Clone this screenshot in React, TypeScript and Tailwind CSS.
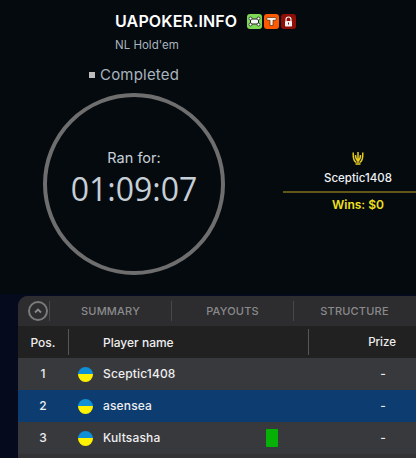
const F = "font-['Inter','Noto_Sans',sans-serif]";

function Flag() {
  return (
    <span className="flex h-[15px] w-[15px] flex-col overflow-hidden rounded-full">
      <span className="h-1/2 bg-[#0f8fd6]" />
      <span className="h-1/2 bg-[#fff200]" />
    </span>
  );
}

function Row({ pos, name, selected, bar }: { pos: string; name: string; selected?: boolean; bar?: boolean }) {
  return (
    <div className={`flex h-8 items-center text-[12px] font-medium tracking-[0.15px] text-[#eeeeee] ${selected ? "bg-[#0c3c70]" : "bg-[#38393d]"}`}>
      <div className="w-[50px] text-center">{pos}</div>
      <div className="ml-[10px] flex w-[188px] items-center gap-[10px]">
        <Flag />
        <span>{name}</span>
      </div>
      <div className="flex w-[60px] justify-start">
        {bar && <span className="h-[18px] w-3 rounded-[1px] bg-[#07b007]" />}
      </div>
      <div className="ml-auto w-[62px] pr-[30px] text-right">-</div>
    </div>
  );
}

function Tab({ label }: { label: string }) {
  return (
    <div className="flex h-5 w-[122px] shrink-0 items-center justify-center border-l border-[#48484a] pt-[1px] text-[11px] font-medium tracking-[0.2px] text-[#8a8a8c]">
      {label}
    </div>
  );
}

export default function App() {
  return (
    <div className={`h-[458px] w-[416px] overflow-hidden bg-[#050a1c] ${F}`}>
      <div className="h-[294px] bg-[#050a0f]">
        <div className="pl-[115px] pt-[10px]">
          <div className="flex items-center">
            <span className="w-[132px] text-[16px] leading-[22px] font-semibold tracking-[0.15px] text-white">UAPOKER.INFO</span>
            <div className="mt-[1px] flex gap-[2px]">
              <span className="flex h-[15px] w-[15px] items-center justify-center rounded-[3px] bg-[#7ed957]">
                <svg viewBox="0 0 13 13" className="h-[13px] w-[13px]">
                  <rect x="2.5" y="4" width="8" height="5" fill="#f4f4f4" stroke="#222" strokeWidth="1" />
                  <circle cx="2.5" cy="3.5" r="1.5" fill="#fff" stroke="#222" strokeWidth="0.8" />
                  <circle cx="10.5" cy="3.5" r="1.5" fill="#fff" stroke="#222" strokeWidth="0.8" />
                  <circle cx="2.5" cy="9.5" r="1.5" fill="#fff" stroke="#222" strokeWidth="0.8" />
                  <circle cx="10.5" cy="9.5" r="1.5" fill="#fff" stroke="#222" strokeWidth="0.8" />
                </svg>
              </span>
              <span className="flex h-[15px] w-[15px] items-center justify-center rounded-[3px] bg-[#ff5a00]">
                <svg viewBox="0 0 13 13" className="h-[13px] w-[13px]">
                  <path d="M3 2.500h7a1.200 1.200 0 0 1 0 2.800H8v5.200H5V5.300H3a1.400 1.400 0 0 1 0-2.800z" fill="#f5f0e8" stroke="#3a1a00" strokeWidth="0.6" />
                </svg>
              </span>
              <span className="flex h-[15px] w-[15px] items-center justify-center rounded-[3px] bg-[#8e0f06]">
                <svg viewBox="0 0 13 13" className="h-[13px] w-[13px]">
                  <path d="M4 6V4.500a2.500 2.500 0 0 1 5 0V6" fill="none" stroke="#f2f2f2" strokeWidth="1.200" />
                  <rect x="3" y="6" width="7" height="5.500" rx="0.800" fill="#f2f2f2" />
                  <rect x="6" y="7.500" width="1" height="2" fill="#8e0f06" />
                </svg>
              </span>
            </div>
          </div>
          <div className="mt-[5px] text-[11.5px] leading-4 text-[#a9b4be]">NL Hold'em</div>
        </div>
        <div className="mt-[12px] flex items-center pl-[89px] text-[15px] leading-5 tracking-[0.2px] text-[#a9b4be]">
          <span className="mr-[5px] h-[6px] w-[6px] bg-[#bdbdbd]" />
          Completed
        </div>
        <div className="mt-[8px] flex">
          <div className="ml-[43px] flex h-[182px] w-[182px] shrink-0 flex-col items-center justify-center rounded-full border-4 border-[#6e6e6e] pb-[11px]">
            <div className="text-[14.5px] leading-5 text-[#c6d0d8]">Ran for:</div>
            <div className="mt-[1px] font-['Open_Sans',sans-serif] text-[32px] leading-10 font-normal text-[#c6ced6]">01:09:07</div>
          </div>
          <div className="ml-[58px] flex w-[150px] shrink-0 flex-col items-center pt-[58px]">
            <svg viewBox="0 0 12 14" className="h-[14px] w-[12px]">
              <path d="M6 1v11M1.200 1.500c-.2 5 .3 9 3.300 10M10.800 1.500c.2 5-.3 9-3.300 10M3.500 4c0 3 .5 4.500 2.500 6 2-1.500 2.500-3 2.500-6M3.500 13h5" fill="none" stroke="#e6cc1e" strokeWidth="1.500" />
            </svg>
            <div className="mt-[3px] text-[11.5px] leading-5 font-medium text-[#eef2f6]">Sceptic1408</div>
            <div className="mt-[3px] h-[2px] w-full bg-[#5f5618]" />
            <div className="mt-[2px] text-[12px] leading-5 font-semibold text-[#f0e01e]">Wins: $0</div>
          </div>
        </div>
      </div>
      <div className="ml-[18px] mt-[2px] h-[162px] overflow-hidden rounded-tl-[10px] bg-[#333336]">
        <div className="flex h-[30px] items-center bg-[#2d2d2f]">
          <div className="flex w-[31px] shrink-0 justify-end pr-[1px]">
            <span className="flex h-5 w-5 items-center justify-center rounded-full border-2 border-[#7a7a7a]">
              <svg viewBox="0 0 10 10" className="h-[10px] w-[10px]">
                <path d="M2 6.500l3-3 3 3" fill="none" stroke="#8a8a8a" strokeWidth="1.800" />
              </svg>
            </span>
          </div>
          <Tab label="SUMMARY" />
          <Tab label="PAYOUTS" />
          <Tab label="STRUCTURE" />
        </div>
        <div className="flex h-8 items-center bg-[#212121] text-[12px] font-medium text-[#eeeeee]">
          <div className="w-[50px] pt-[2px] text-center">Pos.</div>
          <div className="h-[26px] w-px bg-[#55555a]" />
          <div className="ml-[34px] w-[205px] pt-[2px]">Player name</div>
          <div className="h-[26px] w-px bg-[#55555a]" />
          <div className="ml-auto pr-[20px] pt-[2px] text-[11.5px]">Prize</div>
        </div>
        <Row pos="1" name="Sceptic1408" />
        <Row pos="2" name="asensea" selected />
        <Row pos="3" name="Kultsasha" bar />
      </div>
    </div>
  );
}
